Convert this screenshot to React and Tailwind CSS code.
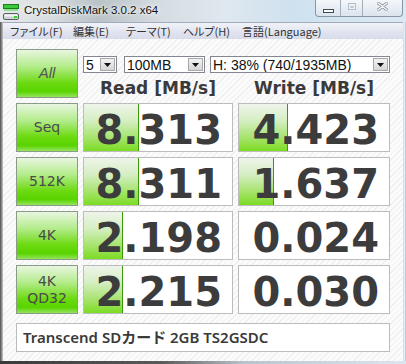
import React from "react";

const rows = [
  { label: ["Seq"], read: "8.313", rw: 55, write: "4.423", ww: 49 },
  { label: ["512K"], read: "8.311", rw: 55, write: "1.637", ww: 35 },
  { label: ["4K"], read: "2.198", rw: 39, write: "0.024", ww: 0 },
  { label: ["4K", "QD32"], read: "2.215", rw: 39, write: "0.030", ww: 0 },
];

const greenBtn =
  "border border-[#8c9a88] bg-[linear-gradient(to_bottom,#e8f6e0_0%,#b4ec8c_35%,#6cda10_70%,#58d400_88%,#94e45c_100%)]";

function AppIcon() {
  return (
    <svg width="16" height="16" viewBox="0 0 16 16" className="shrink-0">
      <rect x="0.5" y="0.5" width="15" height="4" fill="#3cc83c" stroke="#1e7a1e" strokeWidth="1" />
      <rect x="1" y="5" width="14" height="2" fill="#8ee08e" />
      <rect x="0.5" y="9.5" width="15" height="6" rx="1.5" fill="#cfd3d6" stroke="#5c6266" strokeWidth="1" />
      <rect x="1.5" y="10.5" width="13" height="2" fill="#f2f4f5" />
      <rect x="11" y="12" width="3" height="2" fill="#30d030" />
    </svg>
  );
}

function Combo({ w, text }) {
  return (
    <div
      className={`${w} h-[17px] flex items-center bg-white border border-[#828790] pl-[2px] pr-[1px]`}
    >
      <span className="flex-1 text-[14px] leading-none text-[#111] whitespace-nowrap overflow-hidden">
        {text}
      </span>
      <div className="w-[15px] h-[13px] flex items-center justify-center border border-[#a8a8a8] bg-[linear-gradient(to_bottom,#f2f2f2,#d6d6d6)]">
        <svg width="7" height="4" viewBox="0 0 7 4">
          <path d="M0 0h7L3.5 4z" fill="#111" />
        </svg>
      </div>
    </div>
  );
}

function Cell({ value, bar }) {
  return (
    <div className="relative h-[49px] bg-white border border-[#bcbcbc] overflow-hidden">
      {bar > 0 && (
        <div
          className="absolute left-0 top-0 bottom-0 border-r border-[#3a9a0a] bg-[linear-gradient(to_bottom,#eef4ea_0%,#d6eec4_35%,#a8e470_70%,#7cdc24_100%)]"
          style={{ width: bar }}
        />
      )}
      <div className="relative h-full flex items-center justify-end pr-[10px] pt-[5px] font-['DejaVu_Sans'] font-bold text-[40px] leading-none text-[#3c3c3c]">
        {value}
      </div>
    </div>
  );
}

export default function App() {
  return (
    <div className="w-[406px] h-[364px] flex flex-col overflow-hidden bg-[#d6e2ec] font-['Liberation_Sans',sans-serif]">
      {/* title bar */}
      <div className="relative h-[22px] flex items-center bg-[linear-gradient(to_right,#e6eaec_0%,#d8dde0_12%,#b9c2c7_24%,#d6dde2_40%,#dfe8ef_55%,#cfe1ef_72%,#dbe9f4_100%)]">
        <div className="pl-[3px] pt-[1px]">
          <AppIcon />
        </div>
        <span className="ml-[5px] text-[11.5px] text-[#111] [text-shadow:0_0_6px_#fff,0_0_3px_#fff]">
          CrystalDiskMark 3.0.2 x64
        </span>
        <div className="absolute right-[3px] top-0 flex h-[17px] border border-t-0 border-[#8796a4] rounded-b-[4px] overflow-hidden bg-[linear-gradient(to_bottom,#f4f7fa,#dbe4ec)]">
          <div className="w-[25px] flex items-center justify-center border-r border-[#a2afba]">
            <div className="w-[11px] h-[4px] mt-[5px] bg-white border border-[#3e4a56]" />
          </div>
          <div className="w-[22px] flex items-center justify-center border-r border-[#a2afba]">
            <div className="w-[8px] h-[7px] mb-[3px] border border-[#b4bec8] bg-[#eef2f5] flex items-center justify-center">
              <div className="w-[4px] h-[2px] border border-[#c4ccd4]" />
            </div>
          </div>
          <div className="w-[39px] flex items-center justify-center">
            <svg width="11" height="9" viewBox="0 0 11 9" className="mb-[3px]">
              <path d="M1 1l9 7M10 1L1 8" stroke="#8e9aa6" strokeWidth="3" strokeLinecap="round" />
              <path d="M1 1l9 7M10 1L1 8" stroke="#f4f6f8" strokeWidth="1.4" strokeLinecap="round" />
            </svg>
          </div>
        </div>
      </div>

      <div className="flex flex-1">
        <div className="w-[3px] bg-[linear-gradient(to_right,#4c4c4c,#8a8a8a,#c4c8cc)]" />
        <div className="flex-1 flex flex-col">
          {/* menu bar */}
          <div className="h-[17px] flex items-center pl-[7px] border-t border-[#a0acb8] bg-[linear-gradient(to_bottom,#f2f3f9,#e0e3ef_60%,#d8dcea)] text-[11px] leading-none text-[#333] font-['Noto_Sans_CJK_JP',sans-serif] [font-feature-settings:'palt'] whitespace-nowrap">
            <span className="w-[63px] tracking-[0.2px]">ファイル(F)</span>
            <span className="w-[53px]">編集(E)</span>
            <span className="w-[57px]">テーマ(T)</span>
            <span className="w-[59px]">ヘルプ(H)</span>
            <span>言語(Language)</span>
          </div>

          {/* main area */}
          <div className="flex-1 pl-[13px] pt-[10px] bg-[repeating-linear-gradient(135deg,#fbfbfb_0px,#fbfbfb_3px,#efefef_3px,#efefef_4px)]">
            <div className="grid grid-cols-[62px_150px_152px] gap-x-[5px] gap-y-[5px]">
              {/* top row */}
              <div className={`h-[49px] flex items-center justify-center ${greenBtn}`}>
                <span className="italic text-[15px] text-[#555]">All</span>
              </div>
              <div className="col-span-2 flex flex-col">
                <div className="flex mt-[7px]">
                  <Combo w="w-[34px]" text="5" />
                  <div className="ml-[7px]">
                    <Combo w="w-[81px]" text="100MB" />
                  </div>
                  <div className="ml-[5px]">
                    <Combo w="w-[180px]" text="H: 38% (740/1935MB)" />
                  </div>
                </div>
                <div className="grid grid-cols-[150px_152px] gap-x-[5px] mt-[5px] font-['DejaVu_Sans'] font-bold text-[17px] leading-[20px] text-[#3a3a3a]">
                  <div className="text-center">Read [MB/s]</div>
                  <div className="text-center">Write [MB/s]</div>
                </div>
              </div>

              {rows.map((r) => (
                <React.Fragment key={r.label.join()}>
                  <div
                    className={`h-[49px] flex flex-col items-center justify-center ${greenBtn} text-[14px] leading-[17px] text-[#4a4a4a] font-['DejaVu_Sans']`}
                  >
                    {r.label.map((l) => (
                      <span key={l}>{l}</span>
                    ))}
                  </div>
                  <Cell value={r.read} bar={r.rw} />
                  <Cell value={r.write} bar={r.ww} />
                </React.Fragment>
              ))}
            </div>

            <div className="mt-[9px] w-[374px] h-[29px] flex items-center pl-[6px] bg-white border border-[#bcbcbc] text-[15px] font-semibold text-[#3a3a3a] font-['Noto_Sans','Noto_Sans_CJK_JP',sans-serif]">
              Transcend SDカード 2GB TS2GSDC
            </div>
          </div>
        </div>
        <div className="w-[3px] bg-[linear-gradient(to_right,#c8dcec,#e4eef6,#a8bccc)]" />
      </div>
      <div className="h-[3px] bg-[linear-gradient(to_right,#3a3a3a,#5a5a5a_40%,#b8c4cc_60%,#dde6ee)]" />
    </div>
  );
}
